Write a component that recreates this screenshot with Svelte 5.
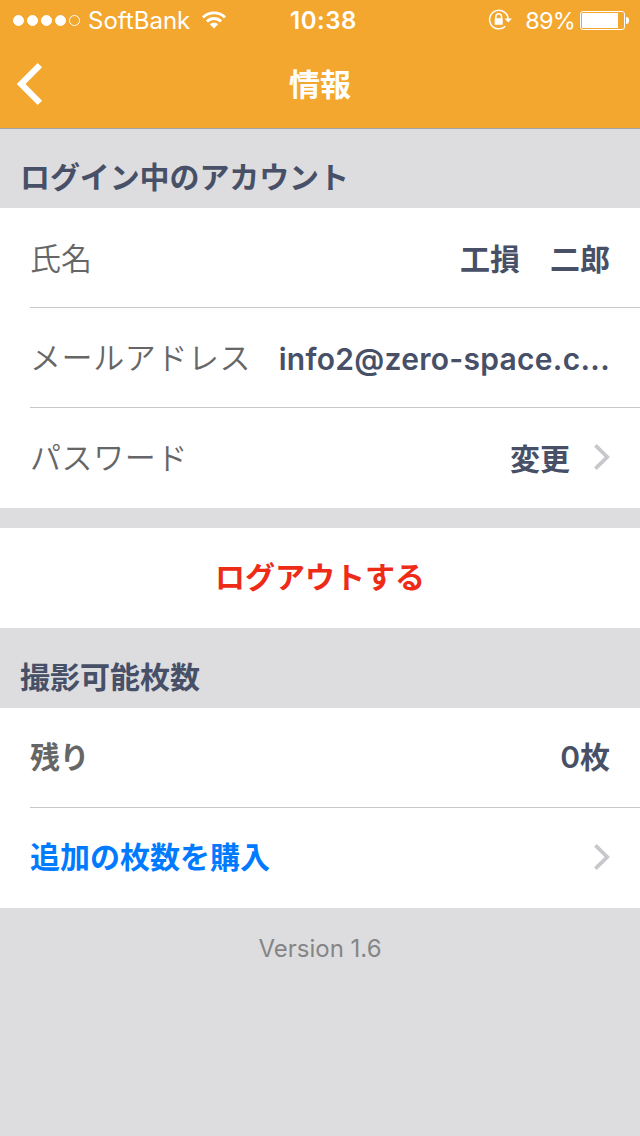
<script lang="ts">
  const carrier = "SoftBank";
  const signal = [true, true, true, true, false];
  const battery = 89;

  const user = {
    name: "工損　二郎",
    email: "info2@zero-space.c...",
  };

  let remaining = $state(0);
</script>

{#snippet chevron()}
  <svg class="chevron" width="16" height="26" viewBox="0 0 16 26" aria-hidden="true">
    <path d="M1.4 1.4 L13.2 13 L1.4 24.6" fill="none" stroke="#c7c7cc" stroke-width="3.8" />
  </svg>
{/snippet}

<div class="screen">
  <header class="top">
    <div class="status">
      <div class="status-left">
        <div class="signal">
          {#each signal as filled}
            <span class="dot" class:filled></span>
          {/each}
        </div>
        <span class="carrier">{carrier}</span>
        <svg class="wifi" width="26" height="20" viewBox="0 0 26 20" aria-hidden="true">
          <g fill="none" stroke="#fff" stroke-width="2.9">
            <path d="M2 7.4 A15.6 15.6 0 0 1 24 7.4" />
            <path d="M5.9 11.4 A10 10 0 0 1 20.1 11.4" />
          </g>
          <path d="M8.8 14.3 A6 6 0 0 1 17.2 14.3 L13 18.6 Z" fill="#fff" />
        </svg>
      </div>
      <span class="clock">10:38</span>
      <div class="status-right">
        <svg class="lock" width="25" height="22" viewBox="0 0 25 22" aria-hidden="true">
          <path d="M17.2 17.4 A9.3 9.3 0 1 1 20.2 10.2" fill="none" stroke="#fff" stroke-width="1.5" />
          <path d="M16.5 9.6 H24 L20.2 13.6 Z" fill="#fff" />
          <path d="M7.9 10 V7.6 A2.8 2.8 0 0 1 13.5 7.6 V10" fill="none" stroke="#fff" stroke-width="1.5" />
          <rect x="6.7" y="9.2" width="8" height="6.6" rx="0.6" fill="#fff" />
        </svg>
        <span class="percent">{battery}%</span>
        <div class="battery">
          <div class="cell"><div class="level" style:width="{battery}%"></div></div>
          <span class="cap"></span>
        </div>
      </div>
    </div>
    <nav class="nav">
      <button class="back" aria-label="戻る">
        <svg width="28" height="44" viewBox="0 0 28 44" aria-hidden="true">
          <path d="M24.9 3.1 L6.1 22 L24.9 40.9" fill="none" stroke="#fff" stroke-width="6.2" />
        </svg>
      </button>
      <h1>情報</h1>
    </nav>
  </header>

  <h2>ログイン中のアカウント</h2>
  <div class="group">
    <div class="row">
      <span class="label name">氏名</span>
      <span class="value">{user.name}</span>
    </div>
    <div class="row">
      <span class="label">メールアドレス</span>
      <span class="value email">{user.email}</span>
    </div>
    <div class="row">
      <span class="label">パスワード</span>
      <span class="value">変更</span>
      {@render chevron()}
    </div>
  </div>

  <button class="logout">ログアウトする</button>

  <h2>撮影可能枚数</h2>
  <div class="group">
    <div class="row">
      <span class="label strong">残り</span>
      <span class="value count">{remaining}枚</span>
    </div>
    <div class="row">
      <span class="link">追加の枚数を購入</span>
      {@render chevron()}
    </div>
  </div>

  <footer>Version 1.6</footer>
</div>

<style>
  :global(body) {
    margin: 0;
    background: #dddddf;
  }

  .screen {
    width: 640px;
    min-height: 1136px;
    background: #dddddf;
    font-family: Inter, "Noto Sans CJK JP", sans-serif;
    font-size: 30px;
    color: #475067;
  }

  button {
    border: 0;
    padding: 0;
    background: none;
    font: inherit;
  }

  .top {
    box-sizing: border-box;
    height: 129px;
    background: #f3a72e;
    border-bottom: 1px solid #a3a3a3;
    color: #fff;
  }

  .status {
    display: grid;
    grid-template-columns: 1fr auto 1fr;
    align-items: center;
    height: 40px;
    padding: 0 11px 0 13px;
    font-size: 24px;
    line-height: 42px;
  }

  .status-left,
  .status-right {
    display: flex;
    align-items: center;
    height: 40px;
  }

  .status-right {
    justify-content: flex-end;
  }

  .signal {
    display: flex;
    gap: 3px;
    width: 67px;
    margin: 0 8px 1px 0;
  }

  .dot {
    box-sizing: border-box;
    width: 11px;
    height: 11px;
    border: 1px solid #fff;
    border-radius: 50%;
  }

  .dot.filled {
    background: #fff;
  }

  .wifi {
    margin: 0 0 2px 11px;
  }

  .clock {
    padding-left: 5px;
    font-weight: 600;
    letter-spacing: 0.5px;
  }

  .lock {
    margin: 0 12px 2px 0;
  }

  .percent {
    font-size: 23.5px;
    letter-spacing: -0.8px;
  }

  .battery {
    display: flex;
    align-items: center;
    gap: 1px;
    margin: 0 0 1px 5px;
  }

  .cell {
    box-sizing: border-box;
    width: 45px;
    height: 19px;
    padding: 1px;
    border: 1px solid #fff;
    border-radius: 3px;
  }

  .level {
    height: 15px;
    border-radius: 1px 0 0 1px;
    background: #fff;
  }

  .cap {
    width: 3px;
    height: 7px;
    border-radius: 0 3px 3px 0;
    background: #fff;
  }

  .nav {
    display: grid;
    grid-template-columns: 60px 1fr 60px;
    align-items: center;
    height: 88px;
  }

  .back {
    display: flex;
    padding: 0 0 2px 15px;
  }

  h1 {
    margin: 0;
    font-size: 31px;
    font-weight: 700;
    line-height: 90px;
    text-align: center;
  }

  h2 {
    box-sizing: border-box;
    height: 80px;
    margin: 0;
    padding: 10px 0 0 20px;
    font-size: 30px;
    font-weight: 700;
    line-height: 78px;
  }

  .top + h2 {
    height: 79px;
    padding-top: 9px;
    letter-spacing: -0.1px;
  }

  .group {
    padding-left: 30px;
    background: #fff;
  }

  .row {
    box-sizing: border-box;
    display: flex;
    align-items: center;
    height: 100px;
    padding-right: 30px;
    border-bottom: 1px solid #c8c7cc;
    line-height: 99px;
    white-space: nowrap;
  }

  .row:last-child {
    border-color: transparent;
  }

  .label {
    font-size: 31px;
    font-weight: 350;
    letter-spacing: 0.6px;
    color: #666;
  }

  .label.name {
    padding-top: 2px;
    letter-spacing: 0;
  }

  .label.strong {
    font-size: 30px;
    font-weight: 700;
    letter-spacing: -0.5px;
  }

  .value {
    margin-left: auto;
    padding-top: 3px;
    font-weight: 600;
  }

  .value.email {
    letter-spacing: 0.28px;
  }

  .value.count {
    padding-top: 0;
  }

  .link {
    font-weight: 700;
    color: #007aff;
  }

  .chevron {
    margin: 0 0 1px 24px;
  }

  .link + .chevron {
    margin-left: auto;
  }

  .logout {
    display: block;
    width: 100%;
    height: 100px;
    margin-top: 20px;
    padding-bottom: 2px;
    background: #fff;
    font-weight: 700;
    line-height: 98px;
    color: #ed2b17;
    text-align: center;
  }

  footer {
    padding-top: 21px;
    font-size: 24px;
    line-height: 40px;
    color: #858585;
    text-align: center;
  }
</style>
